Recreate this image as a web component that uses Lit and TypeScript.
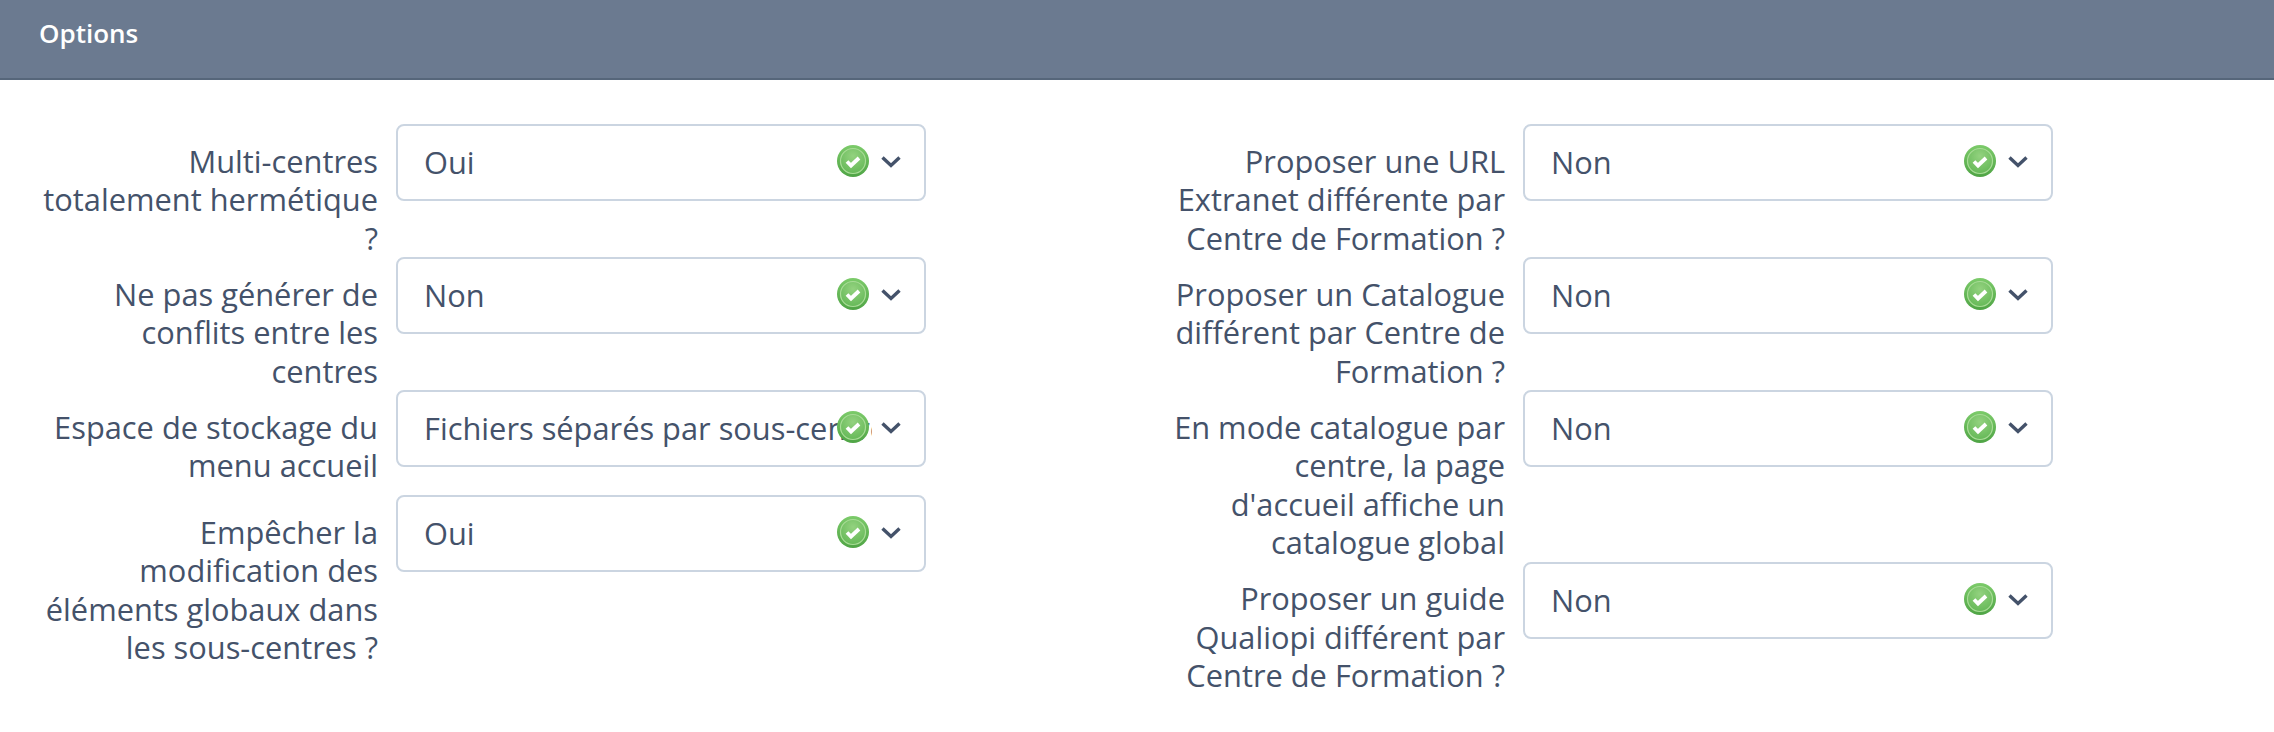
import { LitElement, html, css } from 'lit';
import { customElement } from 'lit/decorators.js';

type Option = { label: string; value: string };

const leftOptions: Option[] = [
  { label: 'Multi-centres totalement hermétique ?', value: 'Oui' },
  { label: 'Ne pas générer de conflits entre les centres', value: 'Non' },
  { label: 'Espace de stockage du menu accueil', value: 'Fichiers séparés par sous-centre' },
  { label: 'Empêcher la modification des éléments globaux dans les sous-centres ?', value: 'Oui' },
];

const rightOptions: Option[] = [
  { label: 'Proposer une URL Extranet différente par Centre de Formation ?', value: 'Non' },
  { label: 'Proposer un Catalogue différent par Centre de Formation ?', value: 'Non' },
  { label: "En mode catalogue par centre, la page d'accueil affiche un catalogue global", value: 'Non' },
  { label: 'Proposer un guide Qualiopi différent par Centre de Formation ?', value: 'Non' },
];

@customElement('app-root')
export class AppRoot extends LitElement {
  static styles = css`
    :host {
      display: block;
      min-height: 732px;
      background: #fff;
      color: #44526a;
      font: 400 30.8px/38.5px 'Open Sans', 'Noto Sans', sans-serif;
    }

    .header {
      box-sizing: border-box;
      height: 80px;
      padding: 15px 39px 0;
      background: #6b7a90;
      border-bottom: 2px solid #56667a;
      color: #fff;
      font-size: 26px;
      line-height: 36px;
      font-weight: 600;
    }

    .columns {
      display: grid;
      grid-template-columns: 1127px 1fr;
      padding: 44px 0 0 38px;
    }

    .row {
      display: flex;
      align-items: flex-start;
      gap: 18px;
    }

    .label {
      box-sizing: border-box;
      flex: 0 0 340px;
      padding-top: 17.5px;
      text-align: right;
    }

    .select {
      position: relative;
      box-sizing: border-box;
      display: flex;
      align-items: center;
      flex: 0 0 530px;
      min-width: 0;
      height: 77px;
      margin-bottom: 28px;
      padding: 0 52px 1px 26px;
      background: #fff;
      border: 2px solid #cbd5e1;
      border-radius: 8px;
    }

    .value {
      flex: 1;
      min-width: 0;
      overflow: hidden;
      white-space: nowrap;
      line-height: 46px;
    }

    .check {
      position: absolute;
      top: 18px;
      right: 54px;
      width: 34px;
      height: 34px;
      filter: blur(0.5px);
    }

    .chevron {
      position: absolute;
      top: 29px;
      right: 23px;
      width: 20px;
      height: 14px;
    }
  `;

  renderRow(option: Option) {
    return html`
      <div class="row">
        <div class="label">${option.label}</div>
        <div class="select">
          <span class="value">${option.value}</span>
          <svg class="check" viewBox="0 0 34 34">
            <defs>
              <linearGradient id="edge" x1="0" y1="0" x2="0" y2="1">
                <stop offset="0%" stop-color="#7ccb6a" />
                <stop offset="100%" stop-color="#4fa445" />
              </linearGradient>
              <radialGradient id="core" cx="50%" cy="30%" r="70%">
                <stop offset="0%" stop-color="#93d27f" />
                <stop offset="100%" stop-color="#66b958" />
              </radialGradient>
            </defs>
            <circle cx="17" cy="17" r="16" fill="url(#edge)" />
            <circle cx="17" cy="17" r="12.5" fill="url(#core)" stroke="#a9dc97" stroke-width="1.2" />
            <path d="M11 17.5l4 4 8-7.5" fill="none" stroke="#fff" stroke-width="3.8" />
          </svg>
          <svg class="chevron" viewBox="0 0 20 14">
            <path d="M1.5 2.5l8.5 8 8.5-8" fill="none" stroke="#44526a" stroke-width="3.4" />
          </svg>
        </div>
      </div>
    `;
  }

  render() {
    return html`
      <div class="header">Options</div>
      <div class="columns">
        <div>${leftOptions.map((o) => this.renderRow(o))}</div>
        <div>${rightOptions.map((o) => this.renderRow(o))}</div>
      </div>
    `;
  }
}
